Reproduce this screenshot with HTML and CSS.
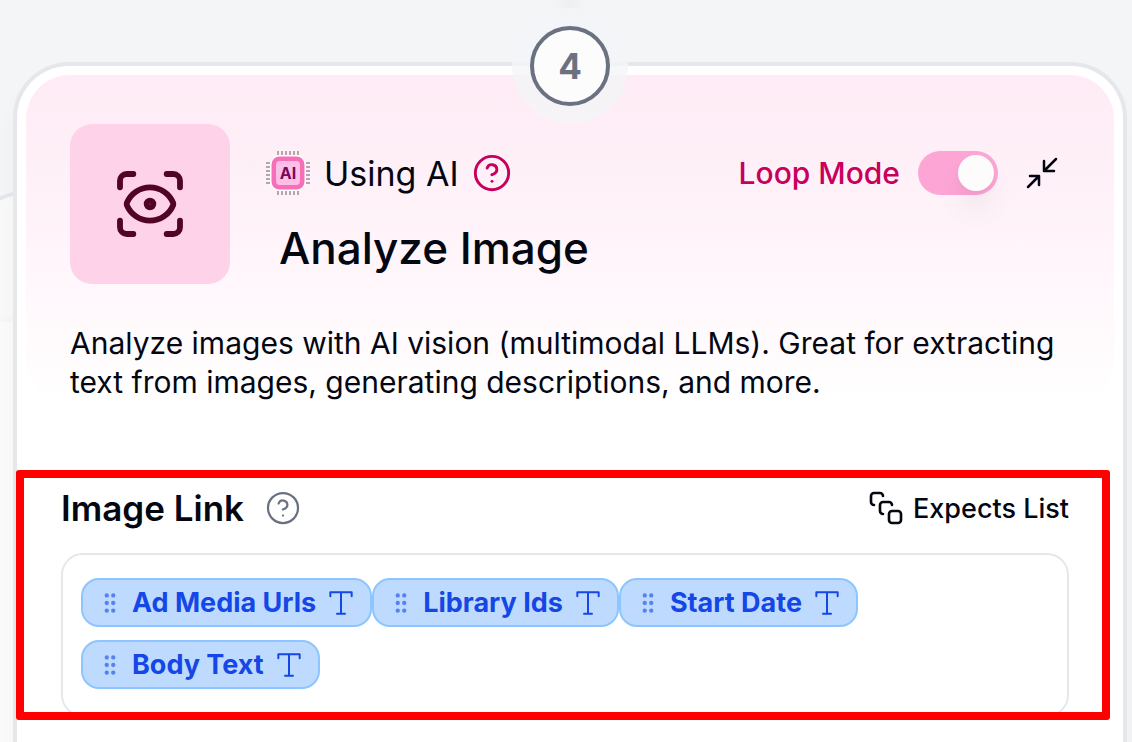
FILE: index.html
```
<!DOCTYPE html>
<html lang="en">
<head>
    <meta charset="UTF-8">
    <title>Analyze Image</title>
    <link rel="stylesheet" href="styles.css">
</head>
<body>
    <!-- shared icons -->
    <svg class="sprite" aria-hidden="true">
        <symbol id="help" viewBox="0 0 24 24">
            <circle cx="12" cy="12" r="10"/>
            <path d="M9.09 9a3 3 0 0 1 5.83 1c0 2-3 3-3 3"/>
            <path d="M12 17h.01"/>
        </symbol>
        <symbol id="grip" viewBox="0 0 24 24">
            <circle cx="9" cy="5" r="1"/>
            <circle cx="9" cy="12" r="1"/>
            <circle cx="9" cy="19" r="1"/>
            <circle cx="15" cy="5" r="1"/>
            <circle cx="15" cy="12" r="1"/>
            <circle cx="15" cy="19" r="1"/>
        </symbol>
        <symbol id="type" viewBox="0 0 24 24">
            <path d="M4 7V4h16v3M9 20h6M12 4v16"/>
        </symbol>
    </svg>

    <div class="back-card"><div class="back-card-top"></div></div>
    <div class="connector"></div>

    <main class="card">
        <div class="step"><span class="step-number">4</span></div>

        <header class="card-header">
            <div class="header-row">
                <div class="tile">
                    <svg class="icon icon-scan" viewBox="0 0 24 24">
                        <path d="M3 7V5a2 2 0 0 1 2-2h2M17 3h2a2 2 0 0 1 2 2v2M21 17v2a2 2 0 0 1-2 2h-2M7 21H5a2 2 0 0 1-2-2v-2"/>
                        <circle cx="12" cy="12" r="1"/>
                        <path d="M18.944 12.33a1 1 0 0 0 0-.66 7.5 7.5 0 0 0-13.888 0 1 1 0 0 0 0 .66 7.5 7.5 0 0 0 13.888 0"/>
                    </svg>
                </div>
                <div class="header-main">
                    <div class="mode-row">
                        <svg class="ai-chip" viewBox="0 0 46 46">
                            <path class="pins" d="M13 1v4M17 1v4M21 1v4M25 1v4M29 1v4M33 1v4M13 41v4M17 41v4M21 41v4M25 41v4M29 41v4M33 41v4M1 13h4M1 17h4M1 21h4M1 25h4M1 29h4M1 33h4M41 13h4M41 17h4M41 21h4M41 25h4M41 29h4M41 33h4"/>
                            <rect x="5" y="5" width="36" height="36" rx="9" fill="#fff"/>
                            <rect x="6.5" y="6.5" width="33" height="33" rx="8" fill="#f76fb9"/>
                            <rect x="11" y="11" width="24" height="24" rx="4" fill="#fdbfe6"/>
                            <text x="23" y="29" text-anchor="middle">AI</text>
                        </svg>
                        <span class="mode-name">Using AI</span>
                        <button class="icon-button" aria-label="About AI steps">
                            <svg class="icon icon-help-lg"><use href="#help"/></svg>
                        </button>
                        <label class="loop-label" for="loopMode">Loop Mode</label>
                        <input class="toggle" type="checkbox" id="loopMode" checked>
                        <button class="icon-button collapse" aria-label="Collapse">
                            <svg class="icon icon-collapse" viewBox="0 0 32 32">
                                <path d="M30 2 18 14M18 4v10h10M2 30l11-11M4 19h9v9"/>
                            </svg>
                        </button>
                    </div>
                    <h1>Analyze Image</h1>
                </div>
            </div>
            <p class="description">Analyze images with AI vision (multimodal LLMs). Great for extracting text from images, generating descriptions, and more.</p>
        </header>

        <section class="field">
            <div class="field-head">
                <h2>Image Link</h2>
                <button class="icon-button" aria-label="About Image Link">
                    <svg class="icon icon-help"><use href="#help"/></svg>
                </button>
                <span class="expects">
                    <svg class="icon icon-stack" viewBox="0 0 24 24">
                        <path d="M4 10c-1.1 0-2-.9-2-2V4c0-1.1.9-2 2-2h4c1.1 0 2 .9 2 2"/>
                        <path d="M10 16c-1.1 0-2-.9-2-2v-4c0-1.1.9-2 2-2h4c1.1 0 2 .9 2 2"/>
                        <rect width="8" height="8" x="14" y="14" rx="2"/>
                    </svg>
                    Expects List
                </span>
            </div>
            <div class="tokens">
                <span class="token"><svg class="icon grip"><use href="#grip"/></svg>Ad Media Urls<svg class="icon type"><use href="#type"/></svg></span>
                <span class="token"><svg class="icon grip"><use href="#grip"/></svg>Library Ids<svg class="icon type"><use href="#type"/></svg></span>
                <span class="token"><svg class="icon grip"><use href="#grip"/></svg>Start Date<svg class="icon type"><use href="#type"/></svg></span>
                <span class="token"><svg class="icon grip"><use href="#grip"/></svg>Body Text<svg class="icon type"><use href="#type"/></svg></span>
            </div>
            <div class="highlight"></div>
        </section>
    </main>
</body>
</html>
```
FILE: styles.css
```
* {
    box-sizing: border-box;
}
body {
    position: relative;
    display: flex;
    flex-direction: column;
    min-height: 100vh;
    margin: 0;
    overflow-x: hidden;
    background-color: #f4f5f7;
    color: #030712;
    font-family: Inter, "Liberation Sans", sans-serif;
}
h1, h2, p {
    margin: 0;
}
.sprite {
    position: absolute;
    width: 0;
    height: 0;
}
.icon {
    flex: none;
    display: block;
    fill: none;
    stroke: currentColor;
    stroke-width: 2;
    stroke-linecap: round;
    stroke-linejoin: round;
}
.icon-button {
    padding: 0;
    border: none;
    background: none;
    color: inherit;
    cursor: pointer;
}

/* card and line that sit behind the open step */
.back-card {
    position: absolute;
    top: 191px;
    bottom: 0;
    left: -32px;
    width: 400px;
    border: 4px solid #e5e7eb;
    border-bottom: none;
    border-radius: 56px 56px 0 0;
    background-color: #fbfbfb;
    overflow: hidden;
}
.back-card-top {
    height: 127px;
    border-bottom: 6px solid #f6f7f7;
    background-color: #f9f9f9;
}
.connector {
    position: absolute;
    top: 0;
    left: 50%;
    width: 32px;
    height: 9px;
    margin-left: -13px;
    background: linear-gradient(90deg, #f4f5f7, #f0f0f2 40%, #f0f0f2 60%, #f4f5f7);
}

.card {
    position: relative;
    flex: 1;
    margin: 62px 5px 0 13px;
    padding: 9px 9px 0;
    border: 4px solid #e5e7eb;
    border-bottom: none;
    border-radius: 56px 56px 0 0;
    background-color: #fff;
    box-shadow: 0 20px 24px rgba(0, 0, 0, 0.03);
}
.step {
    position: absolute;
    top: -58px;
    left: 50%;
    width: 116px;
    height: 116px;
    margin-left: -58px;
    padding: 18px;
    border-radius: 50%;
    background-color: rgba(244, 245, 247, 0.8);
}
.step-number {
    display: flex;
    align-items: center;
    justify-content: center;
    width: 80px;
    height: 80px;
    border: 4px solid #6a7282;
    border-radius: 50%;
    background-color: #fcfcfc;
    color: #6a7282;
    font-size: 35px;
    font-weight: 700;
}

.card-header {
    padding: 49px 44px 0;
    border-radius: 44px;
    background: linear-gradient(#feebf5, #fff4fa 50%, #fff);
}
.header-row {
    display: flex;
    gap: 35px;
}
.tile {
    flex: none;
    display: flex;
    align-items: center;
    justify-content: center;
    width: 160px;
    height: 160px;
    border-radius: 22px;
    background-color: #fed3ea;
    color: #510424;
}
.icon-scan {
    width: 80px;
    height: 80px;
    stroke-width: 1.75;
}
.header-main {
    flex: 1;
    padding-top: 26px;
}
.mode-row {
    display: flex;
    align-items: center;
    height: 46px;
}
.ai-chip {
    width: 46px;
    height: 46px;
}
.ai-chip .pins {
    stroke: #b0a8ac;
    stroke-width: 2;
}
.ai-chip text {
    fill: #78085c;
    font-size: 16px;
    font-weight: 700;
}
.mode-name {
    margin: 0 13px;
    font-size: 34px;
}
.icon-help-lg {
    width: 40px;
    height: 40px;
    color: #c6005c;
    stroke-width: 1.75;
}
.loop-label {
    margin-left: auto;
    color: #c6005c;
    font-size: 30px;
    font-weight: 500;
}
.toggle {
    appearance: none;
    width: 80px;
    height: 44px;
    margin: 0 28px 0 18px;
    padding: 4px;
    border-radius: 22px;
    background-color: #d1d5dc;
    cursor: pointer;
}
.toggle::before {
    content: "";
    display: block;
    width: 36px;
    height: 36px;
    border-radius: 50%;
    background-color: #fcfcfc;
    box-shadow: 0 20px 28px rgba(0, 0, 0, 0.05), 0 4px 8px rgba(0, 0, 0, 0.03);
}
.toggle:checked {
    background-color: #fda5d5;
}
.toggle:checked::before {
    margin-left: auto;
}
.collapse {
    margin-right: 12px;
}
.icon-collapse {
    width: 32px;
    height: 32px;
    stroke-width: 2.5;
}
h1 {
    margin-top: 24px;
    padding-left: 14px;
    font-size: 44px;
    font-weight: 500;
    line-height: 56px;
}
.description {
    margin-top: 40px;
    padding-bottom: 2px;
    font-size: 30px;
    line-height: 39px;
}

.field {
    position: relative;
    margin-top: 66px;
    padding: 14px 45px 0 35px;
}
.field-head {
    display: flex;
    align-items: center;
    height: 48px;
}
h2 {
    margin-right: 21px;
    font-size: 35px;
    font-weight: 600;
}
.icon-help {
    width: 36px;
    height: 36px;
    color: #6a7282;
    stroke-width: 1.5;
}
.expects {
    display: flex;
    align-items: center;
    gap: 9px;
    margin-left: auto;
    font-size: 27px;
    font-weight: 500;
}
.icon-stack {
    width: 36px;
    height: 36px;
    stroke-width: 1.75;
}
.tokens {
    display: flex;
    flex-wrap: wrap;
    gap: 13px 0;
    margin-top: 21px;
    padding: 23px 18px 26px;
    border: 2px solid #e5e7eb;
    border-radius: 22px;
}
.token {
    display: flex;
    align-items: center;
    gap: 9px;
    height: 49px;
    padding: 0 13px 0 14px;
    border: 2px solid #8ec5ff;
    border-radius: 18px;
    background-color: #bedbff;
    color: #1447e6;
    font-size: 27px;
    font-weight: 700;
}
.grip {
    width: 26px;
    height: 26px;
    opacity: 0.6;
}
.type {
    width: 32px;
    height: 32px;
    stroke-width: 1.5;
}
.highlight {
    position: absolute;
    inset: 0 4px -3px -10px;
    border: 8px solid #f00;
    border-radius: 3px;
    pointer-events: none;
}
```
